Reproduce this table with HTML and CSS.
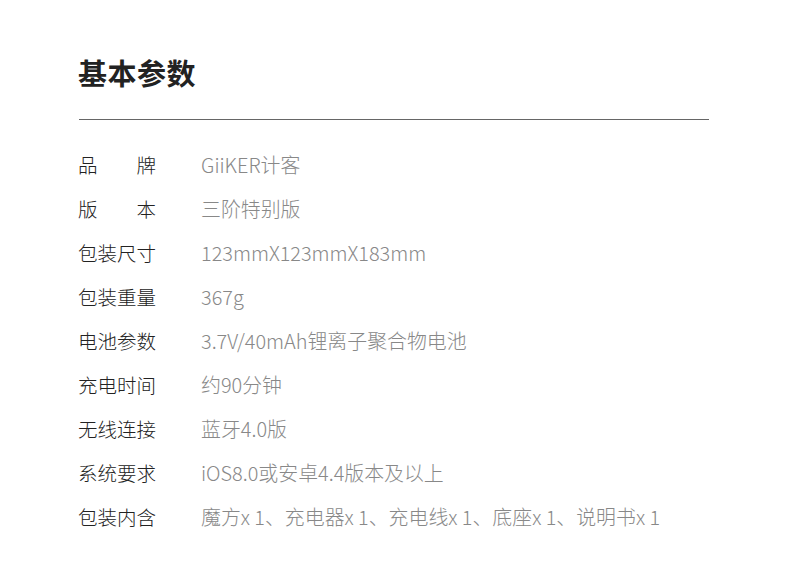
FILE: index.html
```html
<!DOCTYPE html>
<html>
<head>
<meta charset="UTF-8">
<title>基本参数</title>
<link rel="stylesheet" href="styles.css">
</head>
<body>

<div class="spec">
	<h1 class="spec-title">基本参数</h1>
	<hr class="spec-line">

	<ul class="spec-list">
		<li class="spec-row"><span class="spec-key spread"><i>品</i><i>牌</i></span><span class="spec-val">GiiKER计客</span></li>
		<li class="spec-row"><span class="spec-key spread"><i>版</i><i>本</i></span><span class="spec-val">三阶特别版</span></li>
		<li class="spec-row"><span class="spec-key">包装尺寸</span><span class="spec-val">123mmX123mmX183mm</span></li>
		<li class="spec-row"><span class="spec-key">包装重量</span><span class="spec-val">367g</span></li>
		<li class="spec-row"><span class="spec-key">电池参数</span><span class="spec-val">3.7V/40mAh锂离子聚合物电池</span></li>
		<li class="spec-row"><span class="spec-key">充电时间</span><span class="spec-val">约90分钟</span></li>
		<li class="spec-row"><span class="spec-key">无线连接</span><span class="spec-val">蓝牙4.0版</span></li>
		<li class="spec-row"><span class="spec-key">系统要求</span><span class="spec-val">iOS8.0或安卓4.4版本及以上</span></li>
		<li class="spec-row"><span class="spec-key">包装内含</span><span class="spec-val">魔方x 1、充电器x 1、充电线x 1、底座x 1、说明书x 1</span></li>
	</ul>
</div>

</body>
</html>
```

FILE: styles.css
```css
body
{
	margin: 0;
	background-color: #fff;
	font-family: "Noto Sans CJK SC", "Noto Sans", sans-serif;
}

.spec { width: 630px; padding: 50px 0 0 79px; }

.spec-title
{
	margin: 0 0 0 -1px;
	font-size: 29px;
	line-height: 44px;
	font-weight: bold;
	color: #222;
	letter-spacing: 0.5px;
}

.spec-line
{
	margin: 25px 0 22px 0;
	border: none;
	border-top: 1px solid #666;
	height: 0;
}

.spec-list { list-style: none; margin: 0; padding: 0; }

.spec-row
{
	display: flex;
	align-items: center;
	height: 44px;
	font-size: 19.5px;
}

.spec-key
{
	width: 78px;
	margin-right: 45px;
	margin-left: -1px;
	color: #222;
	font-weight: 300;
}
.spec-key.spread { display: flex; justify-content: space-between; }
.spec-key i { font-style: normal; }

.spec-val
{
	color: #888;
	font-size: 19.9px;
	font-weight: 300;
}
```
